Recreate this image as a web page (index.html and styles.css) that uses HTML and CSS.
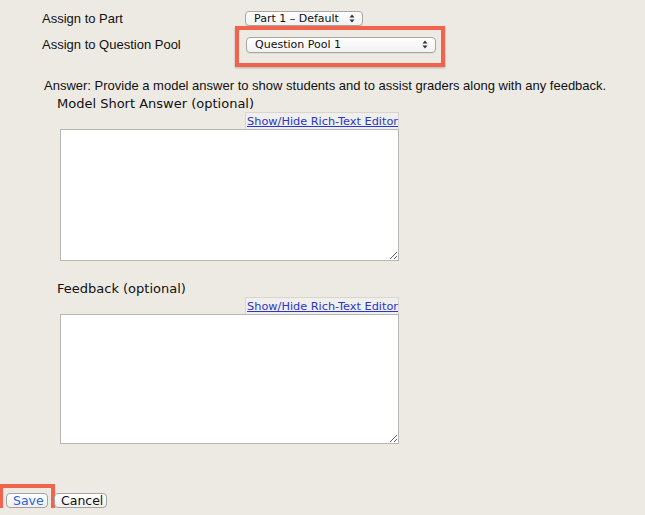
FILE: index.html
```html
<!DOCTYPE html>
<html>
<head>
<meta charset="utf-8">
<link rel="stylesheet" href="styles.css">
</head>
<body>
<div class="page">
  <div class="assign">
    <div class="label">Assign to Part</div>
    <div class="field">
      <div class="select select-part"><span>Part 1 – Default</span>
        <svg class="arrows" width="6" height="9" viewBox="0 0 6 9"><path d="M0.5 3.5 L3 0.5 L5.5 3.5 Z M0.5 5.5 L3 8.5 L5.5 5.5 Z" fill="#333"/></svg>
      </div>
    </div>
    <div class="label label-pool">Assign to Question Pool</div>
    <div class="field field-pool">
      <div class="select select-pool highlight"><span>Question Pool 1</span>
        <svg class="arrows" width="6" height="9" viewBox="0 0 6 9"><path d="M0.5 3.5 L3 0.5 L5.5 3.5 Z M0.5 5.5 L3 8.5 L5.5 5.5 Z" fill="#333"/></svg>
      </div>
    </div>
  </div>

  <p class="intro">Answer: Provide a model answer to show students and to assist graders along with any feedback.</p>

  <div class="block">
    <div class="block-title">Model Short Answer (optional)</div>
    <div class="editor">
      <div class="toggle"><a href="#">Show/Hide Rich-Text Editor</a></div>
      <textarea class="area area-answer"></textarea>
    </div>
  </div>

  <div class="block block-feedback">
    <div class="block-title">Feedback (optional)</div>
    <div class="editor">
      <div class="toggle"><a href="#">Show/Hide Rich-Text Editor</a></div>
      <textarea class="area area-feedback"></textarea>
    </div>
  </div>

  <div class="actions">
    <button class="btn btn-save highlight-save">Save</button>
    <button class="btn btn-cancel">Cancel</button>
  </div>
</div>
</body>
</html>
```

FILE: styles.css
```css
html, body {
  margin: 0;
  padding: 0;
  background: #edeae4;
}
body {
  font-family: "Liberation Sans", Arial, sans-serif;
  font-size: 13px;
  color: #111;
}
.page {
  padding-top: 9px;
}
.assign {
  display: grid;
  grid-template-columns: 203px auto;
  padding-left: 42px;
  row-gap: 9px;
  align-items: center;
}
.label {
  line-height: 16px;
  padding-top: 2px;
}
.label-pool {
  padding-top: 1px;
}
.field {
  display: flex;
}
.select {
  position: relative;
  box-sizing: border-box;
  height: 15px;
  border: 1px solid #a9a7a3;
  border-radius: 4px;
  background: linear-gradient(#ffffff, #f1f1f1);
  box-shadow: 0 1px 0 rgba(0,0,0,0.06);
  font-family: "DejaVu Sans", Verdana, sans-serif;
  font-size: 11px;
  line-height: 13px;
  color: #111;
  display: flex;
  align-items: center;
  justify-content: space-between;
  padding: 0 7px 0 8px;
}
.select-part {
  width: 118px;
}
.select-pool {
  width: 190px;
  height: 16px;
  margin-left: 1px;
  padding-left: 8px;
}
.arrows {
  flex: none;
}
.highlight::after {
  content: "";
  position: absolute;
  top: -12px;
  left: -12px;
  right: -10px;
  bottom: -15px;
  border: 4px solid #f2634e;
  box-shadow: 0 1px 2px rgba(0,0,0,0.25);
  pointer-events: none;
}
.intro {
  margin: 25px 0 0 44px;
  line-height: 16px;
}
.block {
  padding-left: 57px;
}
.block-title {
  font-family: "DejaVu Sans", Verdana, sans-serif;
  font-size: 13px;
  line-height: 16px;
  margin-top: 2px;
  color: #111;
}
.editor {
  width: 339px;
  margin-left: 3px;
  display: flex;
  flex-direction: column;
  align-items: flex-end;
}
.toggle {
  margin-top: 0;
  border: 1px solid #d8d6d2;
  border-bottom: none;
  background: #f1efeb;
  padding: 0 0 0 1px;
  line-height: 15px;
}
.toggle a {
  font-family: "DejaVu Sans", Verdana, sans-serif;
  font-size: 11.3px;
  color: #2a36c8;
  text-decoration: underline;
}
.area {
  display: block;
  box-sizing: border-box;
  width: 339px;
  margin: 0;
  border: 1px solid #b9b7b3;
  background: #fff;
  resize: both;
  padding: 2px;
}
.area-answer {
  height: 132px;
}
.area-feedback {
  height: 130px;
}
.block-feedback {
  margin-top: 20px;
}
.actions {
  display: flex;
  gap: 6px;
  padding-left: 6px;
  margin-top: 49px;
}
.btn {
  position: relative;
  box-sizing: border-box;
  height: 15px;
  padding: 0 6px;
  border: 1px solid #a5a3a0;
  border-radius: 4px;
  background: linear-gradient(#ffffff, #efefef);
  font-family: "DejaVu Sans", Verdana, sans-serif;
  font-size: 12.5px;
  line-height: 13px;
  color: #111;
}
.btn-save {
  width: 42px;
  color: #2a64d8;
}
.btn-cancel {
  width: 53px;
}
.highlight-save::after {
  content: "";
  position: absolute;
  top: -10px;
  left: -8px;
  right: -8px;
  bottom: -12px;
  border: 4px solid #f2634e;
  pointer-events: none;
}
```
